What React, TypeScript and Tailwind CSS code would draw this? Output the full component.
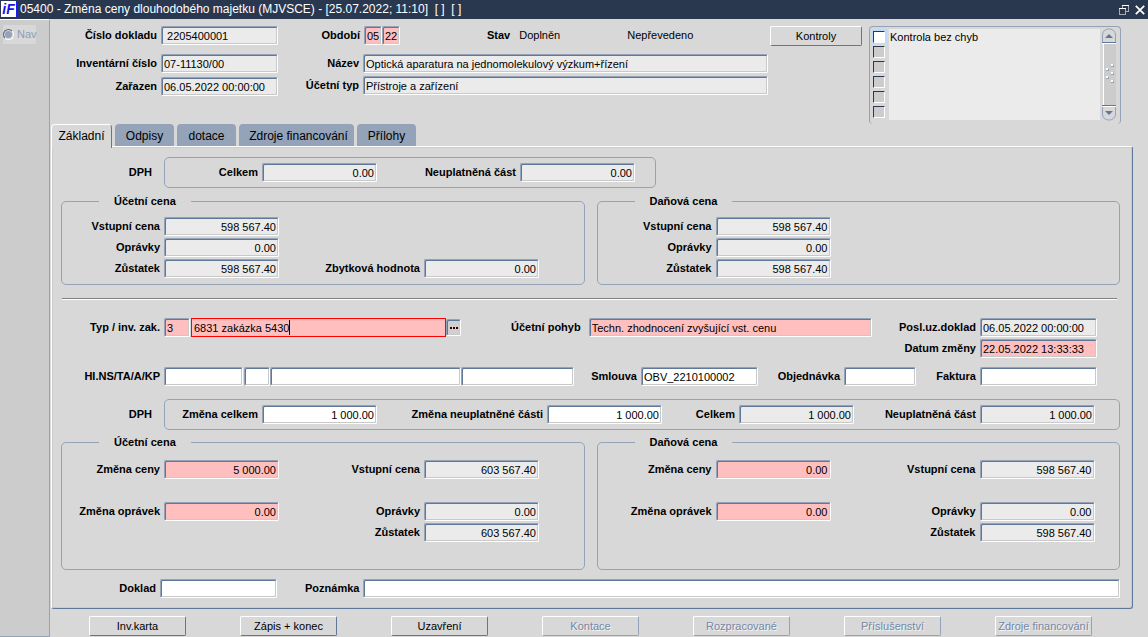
import { useState } from 'react';
import clsx from 'clsx';

type Tone = 'white' | 'grey' | 'pink';

interface FieldProps {
  label?: string;
  name?: string;
  value?: string;
  tone?: Tone;
  right?: boolean;
  width?: string;
  className?: string;
}

const tones: Record<Tone, string> = {
  white: 'bg-white',
  grey: 'bg-[#ebebeb]',
  pink: 'bg-[#ffbfbf]',
};

const sunken =
  'border border-t-[#94a3b8] border-l-[#94a3b8] border-r-white border-b-white rounded-[2px] shadow-[inset_1px_1px_0_#5f7799,inset_-1px_-1px_0_#c9c9c9]';

const Field = ({ label, name, value = '', tone = 'grey', right, width = 'w-[115px]', className }: FieldProps) => {
  const [text, setText] = useState(value);
  return (
    <label className={clsx('flex items-center justify-end', className)}>
      {label && <span className="shrink-0 pr-1 font-bold whitespace-nowrap">{label}</span>}
      <input
        type="text"
        aria-label={label ? undefined : name}
        value={text}
        onChange={(e) => setText(e.target.value)}
        readOnly={tone === 'grey'}
        className={clsx('h-[19px] min-w-0 px-0.5 outline-none', sunken, tones[tone], width, right && 'text-right')}
      />
    </label>
  );
};

const Group = ({ title, className, children }: { title: string; className?: string; children: React.ReactNode }) => (
  <fieldset className={clsx('min-w-0 flex-1 rounded-[5px] border border-[#94a3b8]', className)}>
    <legend className="ml-[37px] px-[15px] font-bold leading-[13px]">{title}</legend>
    {children}
  </fieldset>
);

const FormButton = ({ children, disabled, className }: { children: string; disabled?: boolean; className?: string }) => (
  <button
    type="button"
    disabled={disabled}
    className={clsx(
      'h-5 shrink-0 rounded-[2px] border border-t-white border-l-white text-center whitespace-nowrap',
      disabled
        ? 'border-r-[#94a3b8] border-b-[#94a3b8] text-[#7488a5] [text-shadow:1px_1px_0_#f4f4f4]'
        : 'border-r-[#5f7799] border-b-[#5f7799]',
      className,
    )}
  >
    {children}
  </button>
);

const TitleBar = () => (
  <header className="flex h-[19px] items-center bg-[#2a384f] text-white">
    <div className="ml-px flex h-[17px] w-4 items-center justify-center border-r border-b border-[#1a1aff] bg-white text-[14px] font-bold italic leading-none text-[#1414e6]">
      iF
    </div>
    <h1 className="ml-[3px] text-[12px] whitespace-pre">
      05400 - Změna ceny dlouhodobého majetku (MJVSCE) - [25.07.2022; 11:10]  [ ]  [ ]
    </h1>
    <button type="button" aria-label="Obnovit" className="ml-auto">
      <svg width="10" height="10" viewBox="0 0 10 10" fill="none" shapeRendering="crispEdges">
        <path d="M3 .5h7" stroke="#fff" />
        <path d="M3.5 1v2M9.500 1v5.500H7" stroke="#aaa" />
        <path d="M0 3.500h7" stroke="#fff" />
        <path d="M.5 4v5.500h6V4" stroke="#aaa" />
      </svg>
    </button>
    <button type="button" aria-label="Zavřít" className="ml-1.5 mr-[3px]">
      <svg width="10" height="10" viewBox="0 0 10 10" fill="none" stroke="#fff" strokeWidth="1.700">
        <path d="M.8.8l8.400 8.400M9.200.8L.8 9.200" />
      </svg>
    </button>
  </header>
);

const Sidebar = () => (
  <aside className="w-[50px] shrink-0 rounded-tr-[2px] border-t border-r border-b border-t-white border-r-[#94a3b8] border-b-[#94a3b8] bg-[#ccc] pt-[5px] pl-[3px]">
    <label className="flex h-[19px] w-[33px] items-center bg-[#d8d8d8] text-[#8d9db4]">
      <input
        type="radio"
        name="nav"
        disabled
        className="mr-[3px] size-[11px] shrink-0 appearance-none rounded-full border border-t-[#5c6b80] border-l-[#5c6b80] border-r-white border-b-white bg-[#94a3b8] shadow-[inset_0_0_0_1px_#d8d8d8]"
      />
      Nav
    </label>
  </aside>
);

const Checks = () => (
  <section aria-label="Výsledky kontrol" className="flex h-[98px] w-[252px] shrink-0 rounded-[4px] border border-b-0 border-[#94a3b8] pt-0.5 pl-0.5">
    <div className="flex flex-col">
      {[0, 1, 2, 3, 4, 5].map((i) => (
        <span key={i} className={clsx('flex h-[15px] w-[15px] items-center pl-px', i === 0 && 'bg-[#b9dbff]')}>
          <input
            type="checkbox"
            aria-label={`Kontrola ${i + 1}`}
            className={clsx(
              'size-3 appearance-none border border-t-[#2a384f] border-l-[#2a384f] border-r-white border-b-white',
              i === 0 ? 'bg-white' : 'bg-[#ccc]',
            )}
          />
        </span>
      ))}
    </div>
    <div className="ml-0.5 h-[91px] flex-1 bg-[#ebebeb] pt-px pl-px leading-[14px]">Kontrola bez chyb</div>
    <svg width="16" height="93" viewBox="0 0 16 93" fill="none" className="-mt-px mr-[3px] ml-px">
      <rect x="2" y="15" width="13" height="62" fill="#ccc" />
      <path d="M2.500 15v62" stroke="#fff" />
      <path d="M1.500 14.500V7a6 6 0 0 1 6-6h1a6 6 0 0 1 6 6v7.500" fill="#d8d8d8" stroke="#94a3b8" />
      <path d="M1 14.500h14" stroke="#5f7799" />
      <path d="M1 15.500h14" stroke="#fff" />
      <path d="M4 10h8L8 6z" fill="#5f7799" />
      <path d="M1.500 77.500V86a6 6 0 0 0 6 6h1a6 6 0 0 0 6-6v-8.500" fill="#d8d8d8" stroke="#94a3b8" />
      <path d="M1 77.500h14" stroke="#5f7799" />
      <path d="M1 78.500h14" stroke="#fff" />
      <path d="M4 83h8l-4 4z" fill="#5f7799" />
      <g shapeRendering="crispEdges">
        <path d="M10 37h3v2h-3zM5 41h3v2H5zM10 45h3v2h-3zM5 49h3v2H5zM10 53h3v2h-3z" fill="#94a3b8" />
        <path d="M10 36h2v2h-2zM5 40h2v2H5zM10 44h2v2h-2zM5 48h2v2H5zM10 52h2v2h-2z" fill="#fff" />
      </g>
    </svg>
  </section>
);

const DocumentHead = () => (
  <section className="flex h-[105px] items-start pt-[7px] pr-3">
    <div className="w-[228px] shrink-0">
      <Field label="Číslo dokladu" value=" 2205400001" width="w-[117px]" />
      <Field label="Inventární číslo" value="07-11130/00" width="w-[117px]" className="mt-[9px]" />
      <Field label="Zařazen" value="06.05.2022 00:00:00" width="w-[117px]" className="mt-1" />
    </div>
    <div className="max-w-[490px] min-w-0 flex-1">
      <div className="flex h-[19px] items-center">
        <Field label="Období" value="05" tone="pink" width="w-[18px]" className="w-[104px]" />
        <Field name="Období, rok" value="22" tone="pink" width="w-[18px]" />
        <span className="ml-[87px] font-bold">Stav</span>
        <span className="ml-[9px]">Doplněn</span>
        <span className="ml-[67px]">Nepřevedeno</span>
      </div>
      <div className="mt-[9px] grid grid-cols-[85px_1fr] items-center gap-y-[3px]">
        <label htmlFor="nazev" className="pr-1 text-right font-bold">Název</label>
        <input id="nazev" readOnly value="Optická aparatura na jednomolekulový výzkum+řízení" className={clsx('h-[19px] min-w-0 bg-[#ebebeb] px-0.5', sunken)} />
        <label htmlFor="ucetni-typ" className="pr-1 text-right font-bold">Účetní typ</label>
        <input id="ucetni-typ" readOnly value="Přístroje a zařízení" className={clsx('h-[19px] min-w-0 bg-[#ebebeb] px-0.5', sunken)} />
      </div>
    </div>
    <FormButton className="ml-0.5 w-[92px]">Kontroly</FormButton>
    <div className="ml-auto">
      <Checks />
    </div>
  </section>
);

const Tabs = () => (
  <nav role="tablist" className="ml-px flex h-[22px] gap-[3px] text-[12px]">
    <button type="button" role="tab" aria-selected className="relative z-10 -mb-0.5 w-[61px] rounded-t-[4px] border-t border-l border-r border-t-white border-l-white border-r-[#5f7799] bg-[#d8d8d8]">
      Základní
    </button>
    <button type="button" role="tab" className="w-[59px] rounded-t-[4px] bg-[#94a3b8] pt-0.5">Odpisy</button>
    <button type="button" role="tab" className="w-[59px] rounded-t-[4px] bg-[#94a3b8] pt-0.5">dotace</button>
    <button type="button" role="tab" className="w-[115px] rounded-t-[4px] bg-[#94a3b8] pt-0.5 pl-1">Zdroje financování</button>
    <button type="button" role="tab" className="w-[59px] rounded-t-[4px] bg-[#94a3b8] pt-0.5">Přílohy</button>
  </nav>
);

const OrderField = () => {
  const [order, setOrder] = useState('6831 zakázka 5430');
  return (
    <div className="flex items-center">
      <div className="relative">
        <input
          type="text"
          aria-label="Investiční zakázka"
          value={order}
          onChange={(e) => setOrder(e.target.value)}
          className="block h-[19px] w-[255px] border border-[#ff0000] bg-[#ffbfbf] px-0.5 outline-none"
        />
        <span className="pointer-events-none absolute top-0.5 left-[3px] h-[15px] border-r border-r-black text-transparent" aria-hidden>
          {order}
        </span>
      </div>
      <button type="button" aria-label="Vybrat zakázku" className={clsx('flex h-[17px] w-[15px] items-center justify-center bg-[#d0d0d0]', sunken)}>
        <svg width="8" height="2" viewBox="0 0 8 2" fill="#300">
          <path d="M0 0h2v2H0zM3 0h2v2H3zM6 0h2v2H6z" />
        </svg>
      </button>
    </div>
  );
};

const MainPanel = () => (
  <main className="ml-px rounded-[3px] border border-t-white border-l-white border-r-[#5f7799] border-b-[#5f7799] pt-2.5 pr-3 pb-2.5 pl-[9px] shadow-[inset_1px_1px_0_#ccc,inset_-1px_-1px_0_#ccc]">
    <div className="flex items-center">
      <span className="w-[103px] pr-3 text-right font-bold">DPH</span>
      <div className="flex h-[31px] items-center rounded-[5px] border border-[#94a3b8] pr-5">
        <Field label="Celkem" value="0.00" right className="w-[212px]" />
        <Field label="Neuplatněná část" value="0.00" right className="w-[258px]" />
      </div>
    </div>

    <div className="mt-[7px] flex gap-3">
      <Group title="Účetní cena">
        <div className="grid grid-cols-[217px_260px] gap-y-0.5 pt-[9px] pb-1.5">
          <Field label="Vstupní cena" value="598 567.40" right className="col-start-1" />
          <Field label="Oprávky" value="0.00" right className="col-start-1" />
          <Field label="Zůstatek" value="598 567.40" right className="col-start-1" />
          <Field label="Zbytková hodnota" value="0.00" right />
        </div>
      </Group>
      <Group title="Daňová cena">
        <div className="grid grid-cols-[233px] gap-y-0.5 pt-[9px] pb-1.5">
          <Field label="Vstupní cena" value="598 567.40" right />
          <Field label="Oprávky" value="0.00" right />
          <Field label="Zůstatek" value="598 567.40" right />
        </div>
      </Group>
    </div>

    <hr className="mt-[13px] mr-[3px] ml-px h-0.5 border-t border-b border-t-[#808080] border-b-white" />

    <div className="mt-[18px] flex items-start">
      <Field label="Typ / inv. zak." value="3" tone="pink" width="w-[26px]" className="w-[129px]" />
      <div className="ml-px">
        <OrderField />
      </div>
      <label className="ml-[50px] flex h-[19px] items-center">
        <span className="pr-2 font-bold whitespace-nowrap">Účetní pohyb</span>
        <input type="text" defaultValue="Techn. zhodnocení zvyšující vst. cenu" className={clsx('h-[19px] w-[283px] min-w-0 bg-[#ffbfbf] px-0.5', sunken)} />
      </label>
      <div className="ml-auto flex flex-col gap-0.5 pr-[23px]">
        <Field label="Posl.uz.doklad" value="06.05.2022 00:00:00" width="w-[117px]" />
        <Field label="Datum změny" value="22.05.2022 13:33:33" tone="pink" width="w-[117px]" />
      </div>
    </div>

    <div className="mt-[9px] flex items-center pr-[23px]">
      <Field label="HI.NS/TA/A/KP" tone="white" width="w-[79px]" className="w-[182px]" />
      <Field name="TA" tone="white" width="w-[26px]" className="ml-px" />
      <Field name="A" tone="white" width="w-[191px]" />
      <Field name="KP" tone="white" width="w-[113px]" />
      <Field label="Smlouva" value="OBV_2210100002" tone="white" width="w-[117px]" className="ml-auto" />
      <Field label="Objednávka" tone="white" width="w-[72px]" className="w-[158px]" />
      <Field label="Faktura" tone="white" width="w-[117px]" className="w-[181px]" />
    </div>

    <div className="mt-[13px] flex items-center">
      <span className="w-[103px] pr-3 text-right font-bold">DPH</span>
      <div className="flex h-[31px] flex-1 items-center rounded-[5px] border border-[#94a3b8]">
        <Field label="Změna celkem" value="1 000.00" tone="white" right className="w-[212px]" />
        <Field label="Změna neuplatněné části" value="1 000.00" tone="white" right className="w-[285px]" />
        <Field label="Celkem" value="1 000.00" right className="w-[192px]" />
        <Field label="Neuplatněná část" value="1 000.00" right className="w-[241px]" />
      </div>
    </div>

    <div className="mt-1.5 flex gap-3">
      <Group title="Účetní cena">
        <div className="grid grid-cols-[217px_260px] pt-[11px] pb-[27px]">
          <Field label="Změna ceny" value="5 000.00" tone="pink" right />
          <Field label="Vstupní cena" value="603 567.40" right />
          <Field label="Změna oprávek" value="0.00" tone="pink" right className="mt-[23px]" />
          <Field label="Oprávky" value="0.00" right className="mt-[23px]" />
          <Field label="Zůstatek" value="603 567.40" right className="col-start-2 mt-0.5" />
        </div>
      </Group>
      <Group title="Daňová cena">
        <div className="grid grid-cols-[233px_264px] pt-[11px] pb-[27px]">
          <Field label="Změna ceny" value="0.00" tone="pink" right />
          <Field label="Vstupní cena" value="598 567.40" right />
          <Field label="Změna oprávek" value="0.00" tone="pink" right className="mt-[23px]" />
          <Field label="Oprávky" value="0.00" right className="mt-[23px]" />
          <Field label="Zůstatek" value="598 567.40" right className="col-start-2 mt-0.5" />
        </div>
      </Group>
    </div>

    <div className="mt-[9px] flex items-center">
      <Field label="Doklad" tone="white" width="w-[117px]" className="w-[216px]" />
      <Field label="Poznámka" tone="white" width="flex-1" className="ml-7 flex-1" />
    </div>
  </main>
);

const Actions = () => (
  <footer className="mt-[7px] flex gap-[54px] pl-[39px]">
    <FormButton className="w-[97px]">Inv.karta</FormButton>
    <FormButton className="w-[97px]">Zápis + konec</FormButton>
    <FormButton className="w-[97px]">Uzavření</FormButton>
    <FormButton disabled className="w-[97px]">Kontace</FormButton>
    <FormButton disabled className="w-[97px]">Rozpracované</FormButton>
    <FormButton disabled className="w-[97px]">Příslušenství</FormButton>
    <FormButton disabled className="w-[97px]">Zdroje financování</FormButton>
  </footer>
);

const App = () => (
  <div className="flex min-h-screen flex-col bg-[#d8d8d8] font-['Liberation_Sans',Arial,sans-serif] text-[11px] leading-[15px] text-black">
    <TitleBar />
    <div className="flex flex-1">
      <Sidebar />
      <div className="min-w-0 flex-1 pr-[15px]">
        <DocumentHead />
        <Tabs />
        <MainPanel />
        <Actions />
      </div>
    </div>
  </div>
);

export default App;
